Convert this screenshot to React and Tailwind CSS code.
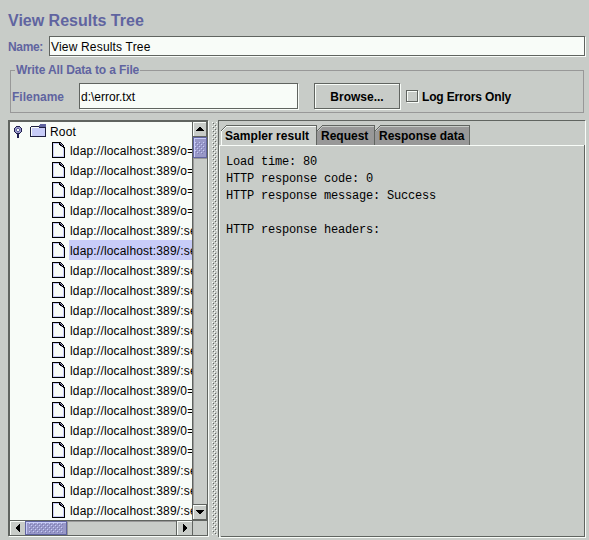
const entries = ["o=", "o=", "o=", "o=", ":se", ":se", ":se", ":se", ":se", ":se", ":se", ":se", "0=", "0=", "0=", "0=", ":se", ":se", ":se"];

function FileIcon() {
  return (
    <svg width="13" height="16" shapeRendering="crispEdges" className="block shrink-0">
      <path d="M0 0H9V1H10V2H11V3H12V5H13V16H0Z" fill="#000" />
      <path d="M1 1H7V3H8V4H9V5H11V6H12V15H1Z" fill="#f8fcf8" />
      <path d="M1 1H7V2H2V14H11V6H12V15H1Z" fill="#c8ccf8" />
      <path d="M8 1H9V2H8ZM9 2H10V3H9ZM10 3H11V4H10ZM9 4H10V5H9Z" fill="#9898c8" />
    </svg>
  );
}

function FolderIcon() {
  return (
    <svg width="16" height="14" shapeRendering="crispEdges" className="block shrink-0">
      <path d="M1 2H9V3H16V13H0V3H1Z" fill="#202040" />
      <path d="M1 3H9V4H15V12H1Z" fill="#c8ccf8" />
      <path d="M1 3H9V4H2V12H1Z" fill="#f8fcf8" />
      <path d="M10 0H16V3H9V1H10Z" fill="#6064a0" />
    </svg>
  );
}

function Handle() {
  return (
    <svg width="8" height="12" shapeRendering="crispEdges" className="block shrink-0">
      <path d="M2 0H6V1H7V2H8V6H7V7H6V8H5V12H3V8H2V7H1V6H0V2H1V1H2Z" fill="#202050" />
      <path d="M2 1H6V2H7V6H6V7H2V6H1V2H2Z" fill="#9898c8" />
      <path d="M3 2H5V3H6V5H5V6H3V5H2V3H3Z" fill="#6064a0" />
      <path d="M3 3H5V5H3Z" fill="#f8fcf8" />
    </svg>
  );
}

function Bumps({ id, width, height, light, dark }) {
  return (
    <svg width={width} height={height} shapeRendering="crispEdges" className="block">
      <defs>
        <pattern id={id} width="4" height="4" patternUnits="userSpaceOnUse">
          <path d="M0 0H1V1H0ZM2 2H3V3H2Z" fill={light} />
          <path d="M1 1H2V2H1ZM3 3H4V4H3Z" fill={dark} />
        </pattern>
      </defs>
      <rect width={width} height={height} fill={`url(#${id})`} />
    </svg>
  );
}

function Arrow({ d, w, h }) {
  return (
    <svg width={w} height={h} shapeRendering="crispEdges" className="block">
      <path d={d} fill="#000" />
    </svg>
  );
}

function Tab({ label, selected, className }) {
  return (
    <div
      className={`relative h-5 border-t border-r border-[#606460] ${selected ? "bg-[#c8ccc8] shadow-[inset_1px_1px_0_#f8fcf8]" : "bg-[#989898] shadow-[inset_0_1px_0_#c8ccc8]"} ${className}`}
    >
      <svg width="6" height="6" shapeRendering="crispEdges" className="absolute -top-px left-0">
        <path d="M0 0H6V1H5V2H4V3H3V4H2V5H1V6H0Z" fill="#c8ccc8" />
        <path d="M5 0H6V1H5V2H4V3H3V4H2V5H1V6H0V5H1V4H2V3H3V2H4V1H5Z" fill="#606460" />
        <path d="M5 1H6V2H5V3H4V4H3V5H2V6H1V5H2V4H3V3H4V2H5Z" fill={selected ? "#f8fcf8" : "#c8ccc8"} />
      </svg>
      <span className="relative block leading-[20px]">{label}</span>
    </div>
  );
}

export default function App() {
  return (
    <div className="flex h-[540px] w-[589px] flex-col overflow-hidden bg-[#c8ccc8] font-['Liberation_Sans',Arial,sans-serif] text-[12px] whitespace-nowrap text-black">
      <h1 className="mt-[10px] ml-2 h-[21px] text-[16px] leading-[22px] font-bold text-[#6064a0]">View Results Tree</h1>

      <div className="mt-[5px] ml-2 flex h-5">
        <label className="w-[41px] leading-[22px] font-bold tracking-[-0.35px] text-[#6064a0]">Name:</label>
        <div className="h-5 w-[536px] border border-[#606460] bg-[#f8fcf8] pl-px leading-[20px] tracking-[0.18px] shadow-[1px_1px_0_#f8fcf8]">View Results Tree</div>
      </div>

      <fieldset className="mt-[7px] ml-[10px] h-[50px] w-[574px]">
        <div className="flex h-[14px] items-center">
          <div className="mt-[1px] h-[7px] w-[5px] translate-y-[3px] border-t border-l border-[#989898]" />
          <span className="w-[125px] pl-px leading-[16px] font-bold tracking-[-0.12px] text-[#6064a0]">Write All Data to a File</span>
          <div className="mt-[1px] h-[7px] flex-1 translate-y-[3px] border-t border-r border-[#989898]" />
        </div>
        <div className="flex h-9 border-x border-b border-[#989898] pt-[6px]">
          <label className="w-[68px] pl-px leading-[28px] font-bold text-[#6064a0]">Filename</label>
          <div className="h-[26px] w-[219px] border border-[#606460] bg-[#f8fcf8] pl-px leading-[26px] shadow-[1px_1px_0_#f8fcf8]">d:\error.txt</div>
          <button className="ml-4 h-[26px] w-[86px] border border-[#606460] text-center leading-[26px] font-bold shadow-[1px_1px_0_#f8fcf8,inset_1px_1px_0_#f8fcf8]">Browse...</button>
          <div className="mt-[7px] ml-[6px] h-3 w-3 border border-[#606460] shadow-[1px_1px_0_#f8fcf8,inset_1px_1px_0_#f8fcf8]" />
          <span className="ml-1 leading-[28px] font-bold tracking-[-0.15px]">Log Errors Only</span>
        </div>
      </fieldset>

      <div className="mt-[7px] ml-2 flex h-[418px]">
        <div className="flex h-[416px] w-[200px] flex-col border-t-2 border-r border-b border-l-2 border-[#606460] shadow-[1px_1px_0_#f8fcf8]">
          <div className="flex h-[398px]">
            <div className="h-[398px] w-[182px] overflow-hidden bg-[#f8fcf8]">
              <div className="flex h-[18px]">
                <div className="mt-1 ml-1 w-4"><Handle /></div>
                <div className="mt-[2px] w-5"><FolderIcon /></div>
                <span className="leading-[20px] tracking-[0.2px]">Root</span>
              </div>
              {entries.map((e, i) => (
                <div key={i} className="flex h-5 pl-[42px]">
                  <div className="mt-[2px] w-[17px]"><FileIcon /></div>
                  <div className={`h-5 w-[123px] shrink-0 overflow-hidden pl-px leading-[22px] tracking-[0.17px] ${i === 5 ? "bg-[#c8ccf8]" : ""}`}>ldap://localhost:389/{e}</div>
                </div>
              ))}
            </div>
            <div className="flex h-[398px] w-[15px] flex-col border-l border-[#606460]">
              <div className="flex h-[15px] items-center justify-center border-r border-b border-[#606460] shadow-[inset_1px_1px_0_#f8fcf8]">
                <Arrow w="8" h="4" d="M3 0H5V1H6V2H7V3H8V4H0V3H1V2H2V1H3Z" />
              </div>
              <div className="flex h-[21px] items-center justify-center border border-[#6064a0] bg-[#9898c8] shadow-[inset_1px_1px_0_#c8ccf8]">
                <Bumps id="vthumb" width="10" height="12" light="#c8ccf8" dark="#7c7cb4" />
              </div>
              <div className="flex-1 shadow-[inset_1px_1px_0_#989898]" />
              <div className="flex h-4 items-center justify-center border-t border-r border-b border-[#606460] shadow-[inset_1px_1px_0_#f8fcf8]">
                <Arrow w="8" h="4" d="M0 0H8V1H7V2H6V3H5V4H3V3H2V2H1V1H0Z" />
              </div>
            </div>
          </div>
          <div className="flex h-[15px] border-t border-[#606460]">
            <div className="flex w-[15px] items-center justify-center shadow-[inset_1px_1px_0_#f8fcf8]">
              <Arrow w="4" h="8" d="M3 0H4V8H3V7H2V6H1V5H0V3H1V2H2V1H3Z" />
            </div>
            <div className="flex w-[42px] items-center justify-center border border-[#6064a0] bg-[#9898c8] shadow-[inset_1px_1px_0_#c8ccf8]">
              <Bumps id="hthumb" width="34" height="10" light="#c8ccf8" dark="#7c7cb4" />
            </div>
            <div className="flex-1 shadow-[inset_1px_1px_0_#989898]" />
            <div className="flex w-4 items-center justify-center border-l border-[#606460] shadow-[inset_1px_1px_0_#f8fcf8]">
              <Arrow w="4" h="8" d="M0 0H1V1H2V2H3V3H4V5H3V6H2V7H1V8H0Z" />
            </div>
            <div className="w-[15px] border-l border-[#606460]" />
          </div>
        </div>

        <div className="mt-[2px] ml-1 w-[6px]">
          <Bumps id="divider" width="5" height="413" light="#f8fcf8" dark="#606460" />
        </div>

        <div className="h-[417px] w-[367px] border-t border-l border-[#606460] shadow-[1px_1px_0_#f8fcf8]">
          <div className="flex h-6 border-r border-[#c8ccc8] pt-1 pl-[2px] font-bold">
            <Tab label="Sampler result" selected className="w-24 pl-1 tracking-[0.05px]" />
            <Tab label="Request" className="w-[58px] pl-1" />
            <Tab label="Response data" className="w-[95px] pl-1" />
          </div>
          <div className="flex h-[392px]">
            <div className="w-[2px] border-t border-l border-[#f8fcf8]" />
            <pre className="h-[392px] w-[364px] border-r border-b border-[#606460] pt-[9px] pl-[5px] font-['Liberation_Mono','Courier_New',monospace] text-[12px] leading-[17px] tracking-[-0.2px] shadow-[inset_0_1px_0_#f8fcf8]">{`Load time: 80
HTTP response code: 0
HTTP response message: Success

HTTP response headers:`}</pre>
          </div>
        </div>
      </div>
    </div>
  );
}
